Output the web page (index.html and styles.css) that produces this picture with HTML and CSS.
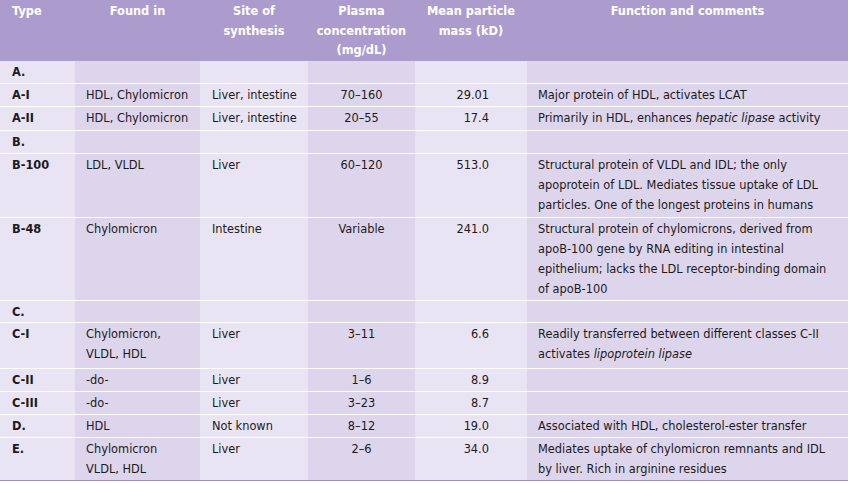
FILE: index.html
```html
<!DOCTYPE html>
<html>
<head>
<meta charset="utf-8">
<link rel="stylesheet" href="styles.css">
</head>
<body>
<table class="apo">
  <colgroup>
    <col class="c1"><col class="c2"><col class="c3"><col class="c4"><col class="c5"><col class="c6">
  </colgroup>
  <thead>
    <tr>
      <th class="type">Type</th>
      <th>Found in</th>
      <th>Site of synthesis</th>
      <th>Plasma concentration (mg/dL)</th>
      <th>Mean particle mass (kD)</th>
      <th>Function and comments</th>
    </tr>
  </thead>
  <tbody>
    <tr><td class="type">A.</td><td></td><td></td><td></td><td></td><td></td></tr>
    <tr><td class="type">A-I</td><td>HDL, Chylomicron</td><td>Liver, intestine</td><td class="conc">70–160</td><td class="mass">29.01</td><td>Major protein of HDL, activates LCAT</td></tr>
    <tr class="plus"><td class="type">A-II</td><td>HDL, Chylomicron</td><td>Liver, intestine</td><td class="conc">20–55</td><td class="mass">17.4</td><td>Primarily in HDL, enhances <i>hepatic lipase</i> activity</td></tr>
    <tr><td class="type">B.</td><td></td><td></td><td></td><td></td><td></td></tr>
    <tr class="plus"><td class="type">B-100</td><td>LDL, VLDL</td><td>Liver</td><td class="conc">60–120</td><td class="mass">513.0</td><td>Structural protein of VLDL and IDL; the only apoprotein of LDL. Mediates tissue uptake of LDL particles. One of the longest proteins in humans</td></tr>
    <tr><td class="type">B-48</td><td>Chylomicron</td><td>Intestine</td><td class="conc">Variable</td><td class="mass">241.0</td><td>Structural protein of chylomicrons, derived from apoB-100 gene by RNA editing in intestinal epithelium; lacks the LDL receptor-binding domain of apoB-100</td></tr>
    <tr class="minus"><td class="type">C.</td><td></td><td></td><td></td><td></td><td></td></tr>
    <tr class="tall"><td class="type">C-I</td><td>Chylomicron, VLDL, HDL</td><td>Liver</td><td class="conc">3–11</td><td class="mass">6.6</td><td>Readily transferred between different classes C-II activates <i>lipoprotein lipase</i></td></tr>
    <tr><td class="type">C-II</td><td>-do-</td><td>Liver</td><td class="conc">1–6</td><td class="mass">8.9</td><td></td></tr>
    <tr><td class="type">C-III</td><td>-do-</td><td>Liver</td><td class="conc">3–23</td><td class="mass">8.7</td><td></td></tr>
    <tr><td class="type">D.</td><td>HDL</td><td>Not known</td><td class="conc">8–12</td><td class="mass">19.0</td><td>Associated with HDL, cholesterol-ester transfer</td></tr>
    <tr class="last"><td class="type">E.</td><td>Chylomicron VLDL, HDL</td><td>Liver</td><td class="conc">2–6</td><td class="mass">34.0</td><td>Mediates uptake of chylomicron remnants and IDL by liver. Rich in arginine residues</td></tr>
  </tbody>
</table>
</body>
</html>
```

FILE: styles.css
```css
html, body {
  margin: 0;
  padding: 0;
  background: #ffffff;
}

.apo {
  width: 848px;
  border-collapse: collapse;
  table-layout: fixed;
  font-family: "DejaVu Sans", "Liberation Sans", sans-serif;
  font-size: 11.4px;
  color: #1c1a20;
}

.c1 { width: 75px; }
.c2 { width: 125px; }
.c3 { width: 108px; }
.c4 { width: 107px; }
.c5 { width: 112px; }
.c6 { width: 321px; }

.apo th {
  background: #ac9cce;
  color: #ffffff;
  font-weight: bold;
  text-align: center;
  vertical-align: top;
  line-height: 19.5px;
  height: 61px;
  padding: 2px 8px 0;
  box-sizing: border-box;
}

.apo th.type {
  text-align: left;
  padding-left: 12px;
}

.apo td {
  line-height: 20px;
  padding: 1px 8px 1px 11px;
  vertical-align: top;
  border-bottom: 1px solid #ffffff;
  background: #e9e4f3;
}

.apo td:nth-child(2n) {
  background: #dcd5ec;
}

.apo td.type {
  font-weight: bold;
  padding-left: 12px;
}

.apo td:nth-child(3) {
  padding-left: 12px;
}

.apo td.conc {
  text-align: center;
  padding-left: 4px;
  padding-right: 4px;
}

.apo td.mass {
  text-align: right;
  padding-right: 38px;
}

.apo tr.plus td { padding-bottom: 2px; }
.apo tr.minus td { padding-bottom: 0; }
.apo tr.tall td { padding-bottom: 4px; }

.apo tr.last td {
  border-bottom: 1px solid #9d8cc6;
}
```
